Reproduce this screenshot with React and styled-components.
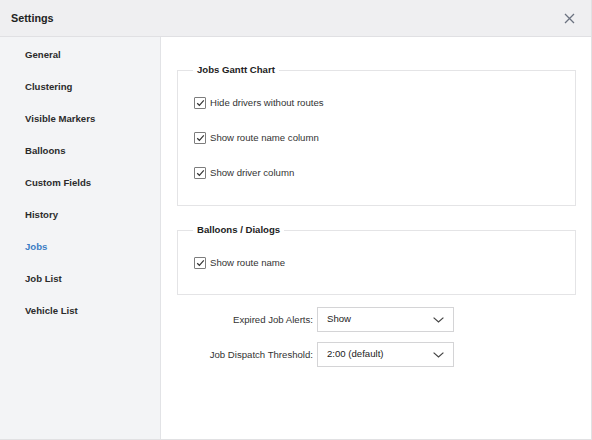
import React from "react";
import styled, { createGlobalStyle } from "styled-components";

const Global = createGlobalStyle`
  html, body { margin: 0; padding: 0; background: #fff; }
  body { font-family: "Liberation Sans", Arial, sans-serif; color: #333; }
  * { box-sizing: border-box; }
`;

const Window = styled.div`
  width: 592px;
  height: 440px;
  display: flex;
  flex-direction: column;
  border-right: 1px solid #e1e1e3;
  border-bottom: 1px solid #e1e1e3;
  background: #fff;
`;

const Header = styled.div`
  height: 37px;
  flex: none;
  display: flex;
  align-items: center;
  justify-content: space-between;
  padding: 0 16px 0 11px;
  background: #efeff1;
  border-bottom: 1px solid #e0e0e3;
`;

const Title = styled.div`
  font-size: 10.8px;
  font-weight: bold;
  color: #222;
`;

const Close = styled.button`
  border: 0;
  background: none;
  padding: 0;
  width: 12px;
  height: 12px;
  display: flex;
  align-items: center;
  justify-content: center;
  cursor: pointer;
`;

const Body = styled.div`
  flex: 1;
  display: flex;
  min-height: 0;
`;

const Sidebar = styled.nav`
  width: 161px;
  flex: none;
  background: #f3f4f6;
  border-right: 1px solid #e2e3e6;
  padding-top: 1px;
  display: flex;
  flex-direction: column;
`;

const NavItem = styled.div`
  height: 32px;
  display: flex;
  align-items: center;
  padding-left: 25px;
  font-size: 9.6px;
  font-weight: bold;
  color: ${(p) => (p.$active ? "#3b7dc4" : "#2b2b2b")};
`;

const Content = styled.div`
  flex: 1;
  padding: 26px 15px 0 16px;
  display: flex;
  flex-direction: column;
`;

const Group = styled.fieldset`
  margin: ${(p) => (p.$first ? "0" : "17px")} 0 0 0;
  padding: 8px 16px ${(p) => p.$pb}px 16px;
  border: 1px solid #e4e4e6;
  min-width: 0;
`;

const Legend = styled.legend`
  margin-left: -1px;
  padding: 0 4px;
  font-size: 9.6px;
  font-weight: bold;
  color: #222;
  line-height: 14px;
`;

const CheckRow = styled.label`
  height: 35px;
  display: flex;
  align-items: center;
  gap: 4px;
  font-size: 9.6px;
  color: #333;
`;

const Box = styled.span`
  width: 12px;
  height: 12px;
  border: 1px solid #7d7d7d;
  border-radius: 1px;
  background: #fff;
  display: flex;
  align-items: center;
  justify-content: center;
  flex: none;
`;

const FormGrid = styled.div`
  margin-top: 12px;
  display: grid;
  grid-template-columns: 136px 137px;
  column-gap: 4px;
  row-gap: 10px;
  align-items: center;
`;

const FieldLabel = styled.div`
  text-align: right;
  font-size: 9.6px;
  color: #333;
`;

const Select = styled.div`
  height: 25px;
  border: 1px solid #d4d4d6;
  background: #fff;
  display: flex;
  align-items: center;
  justify-content: space-between;
  padding: 0 9px 0 9px;
  font-size: 9.6px;
  color: #222;
`;

const SelectText = styled.span`
  margin-top: -2px;
`;

function Check({ label }) {
  return (
    <CheckRow>
      <Box>
        <svg width="9" height="8" viewBox="0 0 9 8">
          <path d="M1.2 4.2 L3.4 6.3 L7.8 1.4" fill="none" stroke="#333" strokeWidth="1.2" />
        </svg>
      </Box>
      {label}
    </CheckRow>
  );
}

function Dropdown({ value }) {
  return (
    <Select>
      <SelectText>{value}</SelectText>
      <svg width="11" height="6" viewBox="0 0 11 6">
        <path d="M0.6 0.6 L5.5 5 L10.4 0.6" fill="none" stroke="#444" strokeWidth="1.2" />
      </svg>
    </Select>
  );
}

const items = [
  "General",
  "Clustering",
  "Visible Markers",
  "Balloons",
  "Custom Fields",
  "History",
  "Jobs",
  "Job List",
  "Vehicle List",
];

export default function App() {
  return (
    <>
      <Global />
      <Window>
        <Header>
          <Title>Settings</Title>
          <Close aria-label="Close">
            <svg width="11" height="11" viewBox="0 0 11 11">
              <path d="M1 1 L10 10 M10 1 L1 10" stroke="#6b7280" strokeWidth="1.3" />
            </svg>
          </Close>
        </Header>
        <Body>
          <Sidebar>
            {items.map((it) => (
              <NavItem key={it} $active={it === "Jobs"}>
                {it}
              </NavItem>
            ))}
          </Sidebar>
          <Content>
            <Group $first $pb={15}>
              <Legend>Jobs Gantt Chart</Legend>
              <Check label="Hide drivers without routes" />
              <Check label="Show route name column" />
              <Check label="Show driver column" />
            </Group>
            <Group $pb={14}>
              <Legend>Balloons / Dialogs</Legend>
              <Check label="Show route name" />
            </Group>
            <FormGrid>
              <FieldLabel>Expired Job Alerts:</FieldLabel>
              <Dropdown value="Show" />
              <FieldLabel>Job Dispatch Threshold:</FieldLabel>
              <Dropdown value="2:00 (default)" />
            </FormGrid>
          </Content>
        </Body>
      </Window>
    </>
  );
}
